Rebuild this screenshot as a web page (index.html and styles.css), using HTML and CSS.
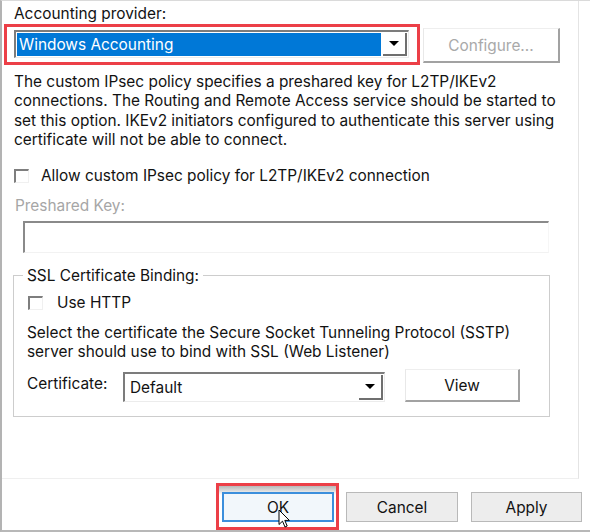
FILE: index.html
```html
<!DOCTYPE html>
<html lang="en">
<head>
<meta charset="utf-8">
<title>Properties</title>
<link rel="stylesheet" href="styles.css">
</head>
<body>
<div class="window">
  <div class="panel">
    <div class="label">Accounting provider:</div>
    <div class="provider-row">
      <div class="highlight">
        <div class="combo combo-provider">
          <div class="combo-value selected">Windows Accounting</div>
          <div class="combo-btn"><span class="arrow"></span></div>
        </div>
      </div>
      <div class="btn3d btn-configure disabled">Configure...</div>
    </div>
    <p class="desc">The custom IPsec policy specifies a preshared key for L2TP/IKEv2<br>connections. The Routing and Remote Access service should be started to<br>set this option. IKEv2 initiators configured to authenticate this server using<br>certificate will not be able to connect.</p>
    <div class="check-row check-allow">
      <span class="checkbox"></span>
      <span class="check-text">Allow custom IPsec policy for L2TP/IKEv2 connection</span>
    </div>
    <div class="label disabled-label">Preshared Key:</div>
    <div class="textbox"></div>
    <fieldset class="group">
      <legend class="group-title">SSL Certificate Binding:</legend>
      <div class="check-row check-http">
        <span class="checkbox"></span>
        <span class="check-text">Use HTTP</span>
      </div>
      <p class="group-desc">Select the certificate the Secure Socket Tunneling Protocol (SSTP)<br>server should use to bind with SSL (Web Listener)</p>
      <div class="cert-row">
        <span class="cert-label">Certificate:</span>
        <div class="combo combo-cert">
          <div class="combo-value">Default</div>
          <div class="combo-btn"><span class="arrow"></span></div>
        </div>
        <div class="btn3d btn-view">View</div>
      </div>
    </fieldset>
  </div>
  <div class="footer">
    <div class="ok-wrap">
      <div class="btn btn-ok">OK</div>
    </div>
    <div class="btn btn-cancel">Cancel</div>
    <div class="btn btn-apply">Apply</div>
  </div>
  <svg class="cursor" width="13" height="20" viewBox="0 0 13 20" aria-hidden="true">
    <path d="M1 1 L1 15.5 L4.5 12.2 L7 18 L9.2 17 L6.8 11.4 L11.4 11.4 Z" fill="#fff" stroke="#000" stroke-width="1" stroke-linejoin="miter"/>
  </svg>
</div>
</body>
</html>
```

FILE: styles.css
```css
html, body {
  margin: 0;
  padding: 0;
}

body {
  width: 590px;
  height: 532px;
  overflow: hidden;
  background: #ffffff;
  font-family: Inter, "Open Sans", "Liberation Sans", sans-serif;
  font-size: 15.4px;
  color: #121212;
}

.window {
  position: relative;
  box-sizing: border-box;
  width: 590px;
  height: 532px;
  border-top: 1px solid #dadada;
  border-left: 2px solid #b3b3b3;
  border-bottom: 2px solid #b8b8b8;
  display: flex;
  flex-direction: column;
}

.panel {
  box-sizing: border-box;
  width: 577px;
  height: 478px;
  border-right: 1px solid #e4e4e4;
  border-bottom: 1px solid #efefef;
  padding: 3px 0 0 12px;
}

.label {
  line-height: 19px;
  white-space: nowrap;
}

.disabled-label {
  color: #a6a6a6;
  margin: 11px 0 0 1px;
}

/* provider row */
.provider-row {
  display: flex;
  align-items: flex-start;
  margin: 1px 0 0 -10px;
}

.highlight {
  border: 3px solid #ec3f47;
  padding: 3px 8px 4px 7px;
}

.combo {
  box-sizing: border-box;
  display: flex;
  background: #ffffff;
  border-top: 2px solid #7c7c7c;
  border-left: 2px solid #7c7c7c;
  border-right: 1px solid #ececec;
  border-bottom: 1px solid #ececec;
  padding: 1px;
}

.combo-provider {
  width: 395px;
  height: 28px;
}

.combo-value {
  flex: 1;
  line-height: 23px;
  padding-left: 2px;
  white-space: nowrap;
}

.combo-value.selected {
  background: #0078d7;
  color: #ffffff;
}

.combo-btn {
  box-sizing: border-box;
  width: 24px;
  margin-left: 2px;
  border-right: 2px solid #6f6f6f;
  border-bottom: 2px solid #6f6f6f;
  display: flex;
  align-items: center;
  justify-content: center;
}

.arrow {
  width: 0;
  height: 0;
  border-left: 5px solid transparent;
  border-right: 5px solid transparent;
  border-top: 5px solid #000000;
}

.btn3d {
  box-sizing: border-box;
  display: flex;
  align-items: center;
  justify-content: center;
  background: #ffffff;
  border-top: 1px solid #eeeeee;
  border-left: 1px solid #e8e8e8;
  border-right: 2px solid #a2a2a2;
  border-bottom: 2px solid #a2a2a2;
  white-space: nowrap;
}

.btn-configure {
  width: 137px;
  height: 35px;
  margin: 4px 0 0 3px;
}

.disabled {
  color: #a9a9a9;
}

/* description */
.desc {
  margin: 7px 0 0 0;
  line-height: 19.3px;
  white-space: nowrap;
}

/* checkboxes */
.check-row {
  display: flex;
  align-items: center;
  height: 19px;
  line-height: 19px;
  white-space: nowrap;
}

.check-allow {
  margin-top: 17px;
}

.checkbox {
  box-sizing: border-box;
  width: 15px;
  height: 14px;
  border-top: 2px solid #7e7e7e;
  border-left: 2px solid #7e7e7e;
  border-right: 1px solid #f0f0f0;
  border-bottom: 1px solid #f0f0f0;
  background: #ffffff;
  margin-right: 12px;
}

.check-http .checkbox {
  margin-left: 1px;
  margin-right: 14px;
}

/* textbox */
.textbox {
  box-sizing: border-box;
  width: 526px;
  height: 32px;
  margin: 6px 0 0 9px;
  border-top: 2px solid #8a8a8a;
  border-left: 2px solid #8a8a8a;
  border-right: 1px solid #f6f6f6;
  border-bottom: 1px solid #f2f2f2;
  background: #ffffff;
}

/* group box */
.group {
  box-sizing: border-box;
  width: 537px;
  margin: 13px 0 0 -1px;
  padding: 0 0 14px 13px;
  border: 1px solid #cdcdcd;
  min-width: 0;
}

.group-title {
  padding: 0 4px;
  margin-left: -4px;
  line-height: 19px;
  white-space: nowrap;
}

.check-http {
  margin-top: 8px;
}

.group-desc {
  margin: 11px 0 0 0;
  line-height: 19px;
  white-space: nowrap;
}

.cert-row {
  display: flex;
  align-items: flex-end;
  margin-top: 8px;
}

.cert-label {
  align-self: flex-start;
  width: 96px;
  margin-top: 5px;
  line-height: 19px;
}

.combo-cert {
  width: 262px;
  height: 30px;
}

.combo-cert .combo-value {
  line-height: 25px;
  padding-left: 4px;
}

.btn-view {
  width: 115px;
  height: 33px;
  margin-left: 20px;
}

/* footer */
.footer {
  display: flex;
  align-items: flex-start;
  justify-content: flex-end;
  padding: 4px 8px 0 0;
}

.ok-wrap {
  border: 3px solid #ec3f47;
  padding: 6px 2px 5px 3px;
  background: linear-gradient(to bottom, #b8b8b8 0, #d6d6d6 4px, #f1f1f1 7px, #ffffff 9px);
}

.btn {
  box-sizing: border-box;
  width: 112px;
  height: 30px;
  display: flex;
  align-items: center;
  justify-content: center;
  background: #ededed;
  border: 1px solid #b9b9b9;
  white-space: nowrap;
}

.btn-ok {
  background: #f2f7fb;
  border: 2px solid #3c8fdc;
}

.btn-cancel {
  margin: 9px 0 0 7px;
}

.btn-apply {
  width: 111px;
  margin: 9px 0 0 13px;
}

.cursor {
  position: absolute;
  left: 276px;
  top: 508px;
}
```
